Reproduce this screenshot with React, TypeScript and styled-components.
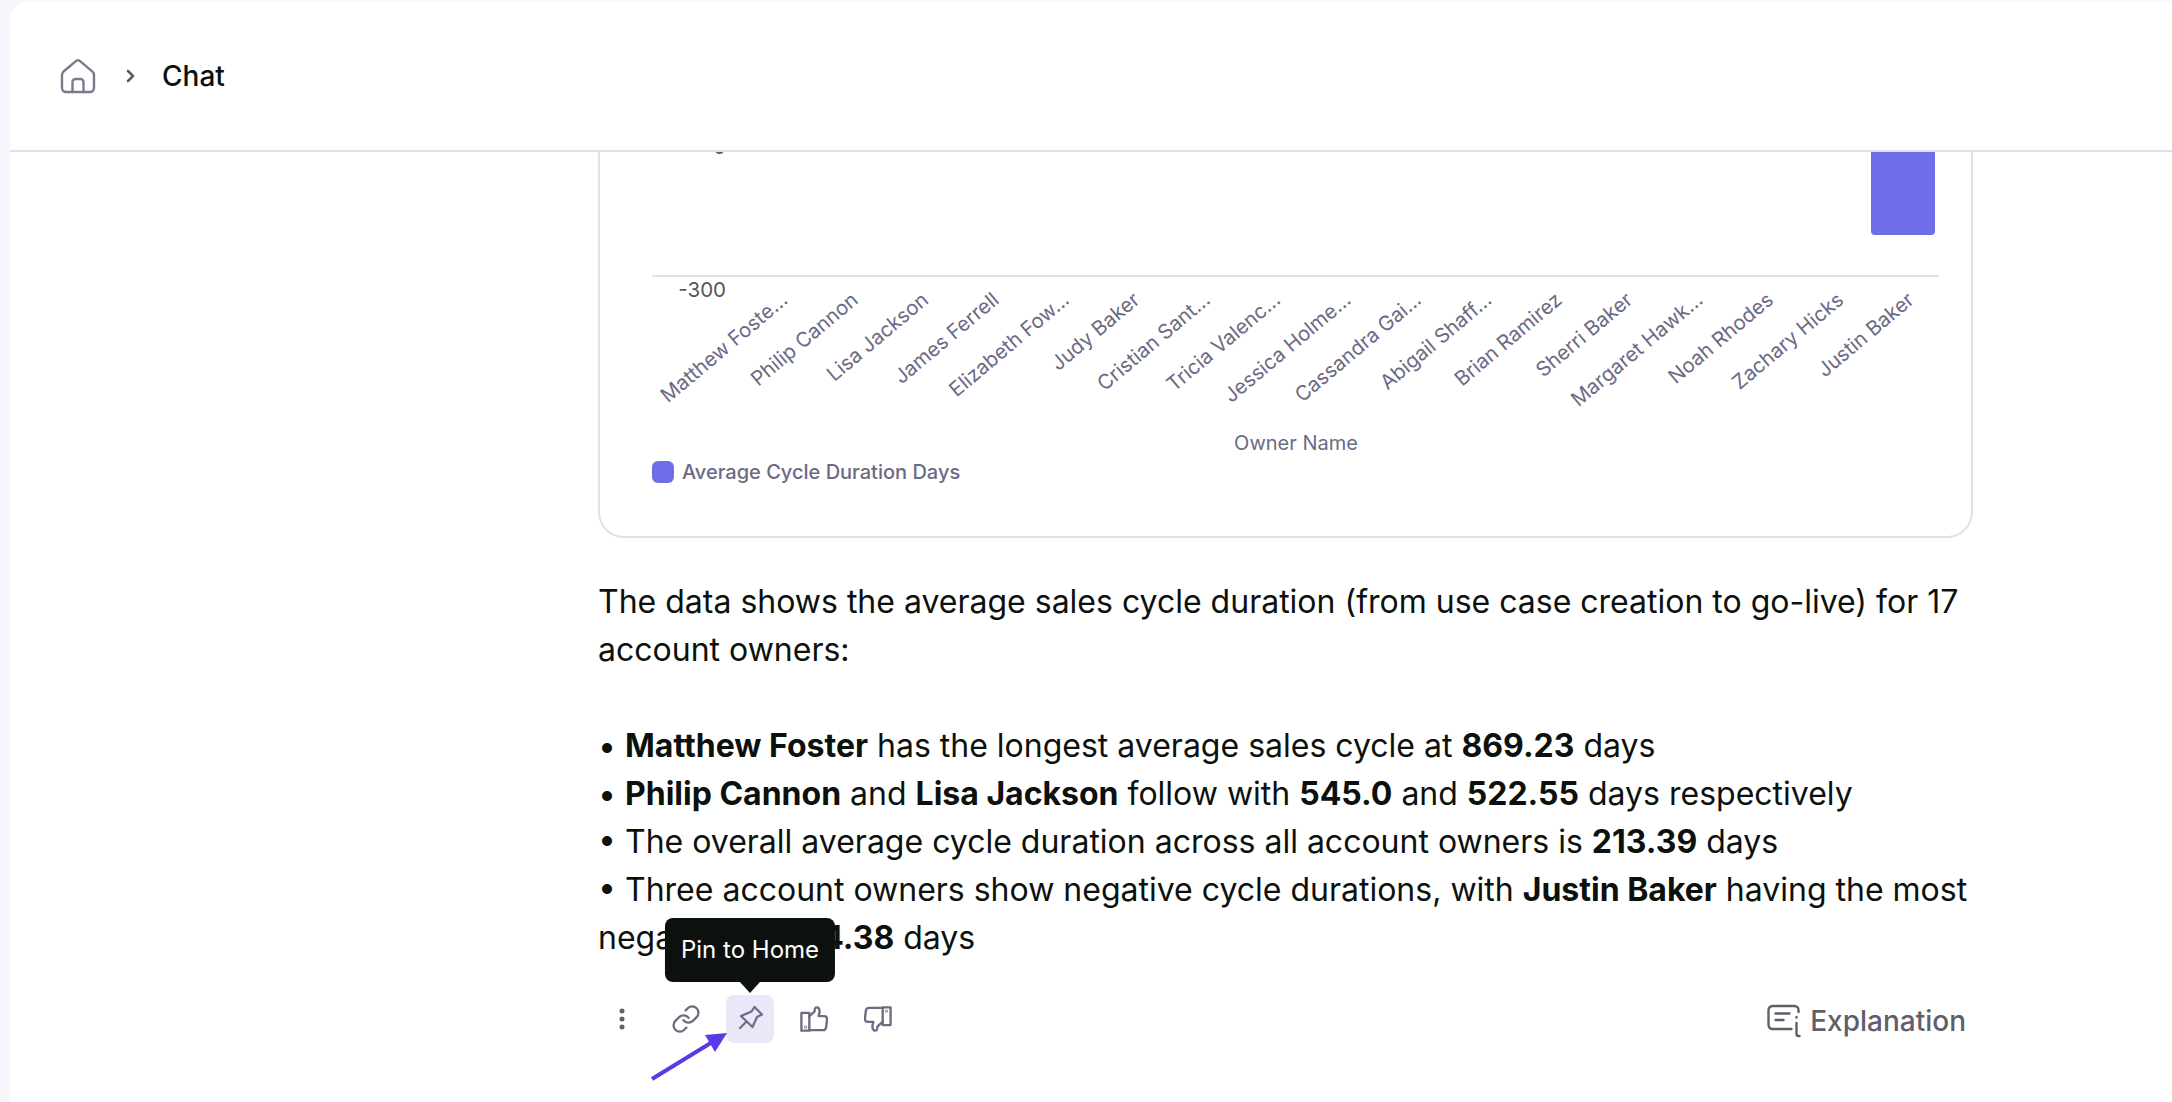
import React from "react";
import styled, { createGlobalStyle } from "styled-components";

const owners = [
  "Matthew Foste...",
  "Philip Cannon",
  "Lisa Jackson",
  "James Ferrell",
  "Elizabeth Fow...",
  "Judy Baker",
  "Cristian Sant...",
  "Tricia Valenc...",
  "Jessica Holme...",
  "Cassandra Gai...",
  "Abigail Shaff...",
  "Brian Ramirez",
  "Sherri Baker",
  "Margaret Hawk...",
  "Noah Rhodes",
  "Zachary Hicks",
  "Justin Baker",
];

const GlobalStyle = createGlobalStyle`
  html, body {
    margin: 0;
    padding: 0;
    background: #f8f7fd;
    overflow: hidden;
  }
`;

const Page = styled.div`
  width: 2172px;
  height: 1102px;
  padding: 2px 0 0 10px;
  box-sizing: border-box;
  font-family: "Inter", sans-serif;
  color: #0c110d;
`;

const Panel = styled.div`
  height: 1100px;
  background: #ffffff;
  border-top-left-radius: 18px;
  display: flex;
  flex-direction: column;
  overflow: hidden;
`;

const Header = styled.header`
  flex: none;
  height: 148px;
  padding: 0 0 0 50px;
  border-bottom: 2px solid #e2e1ea;
  display: flex;
  align-items: center;
`;

const Crumb = styled.span`
  margin-left: 27px;
  font-size: 28px;
  font-weight: 500;
  line-height: 34px;
`;

const Chevron = styled.svg`
  margin-left: 29px;
`;

const Body = styled.main`
  flex: 1;
  min-height: 0;
  overflow: hidden;
  display: flex;
  flex-direction: column;
  justify-content: flex-end;
  padding: 0 0 59px 588px;
`;

const Column = styled.div`
  width: 1375px;
  flex: none;
`;

const ChartCard = styled.section`
  box-sizing: border-box;
  border: 2px solid #e2e1ea;
  border-radius: 0 0 26px 26px;
  padding: 0 32px 53px 52px;
`;

const ChartSvg = styled.svg`
  display: block;
`;

const AxisText = styled.text`
  font-family: "Inter", sans-serif;
  font-size: 20.5px;
  fill: #55555a;
`;

const OwnerText = styled.text`
  font-family: "Inter", sans-serif;
  font-size: 20.3px;
  fill: #6b6a85;
`;

const AxisTitle = styled.text`
  font-family: "Inter", sans-serif;
  font-size: 20px;
  fill: #6b6a85;
`;

const Legend = styled.div`
  margin-top: 5px;
  display: flex;
  align-items: center;
  gap: 8px;
  font-size: 20px;
  font-weight: 500;
  line-height: 22px;
  color: #6b6a85;
`;

const Swatch = styled.span`
  width: 22px;
  height: 22px;
  border-radius: 6px;
  background: #6e6ee8;
`;

const Answer = styled.div`
  margin-top: 40px;
  font-size: 32px;
  line-height: 48px;
`;

const Para = styled.p`
  margin: 0 0 48px;
`;

const Bullet = styled.div``;

const Toolbar = styled.div`
  margin-top: 33px;
  height: 48px;
  display: flex;
  align-items: center;
  justify-content: space-between;
`;

const IconRow = styled.div`
  display: flex;
  align-items: center;
  margin-left: -8px;
`;

const IconButton = styled.button<{ $active?: boolean }>`
  position: relative;
  width: 48px;
  height: 48px;
  margin: 0 8px;
  padding: 0;
  border: 0;
  border-radius: 8px;
  background: ${(p) => (p.$active ? "#e9e8f8" : "transparent")};
  color: #6c6b80;
  display: flex;
  align-items: center;
  justify-content: center;
`;

const Tooltip = styled.div`
  position: absolute;
  left: 50%;
  bottom: 61px;
  transform: translateX(-50%);
  padding: 0 16px;
  height: 64px;
  border-radius: 8px;
  background: #0c110d;
  color: #ffffff;
  font-family: "Inter", sans-serif;
  font-size: 24px;
  line-height: 64px;
  white-space: nowrap;

  &::after {
    content: "";
    position: absolute;
    left: 50%;
    bottom: -11px;
    margin-left: -10px;
    border-left: 10px solid transparent;
    border-right: 10px solid transparent;
    border-top: 11px solid #0c110d;
  }
`;

const Annotation = styled.svg`
  position: absolute;
  left: -82px;
  top: 30px;
  overflow: visible;
`;

const ExplainButton = styled.button`
  display: flex;
  align-items: center;
  gap: 7px;
  margin: 4px 7px 0 0;
  padding: 0;
  border: 0;
  background: transparent;
  color: #5f5f6b;
  font-family: "Inter", sans-serif;
  font-size: 28px;
  font-weight: 500;
`;

const ThumbSvg = styled.svg<{ $flip?: boolean }>`
  transform: ${(p) => (p.$flip ? "rotate(180deg)" : "none")};
`;

const stroke = {
  fill: "none",
  stroke: "currentColor",
  strokeWidth: 2,
  strokeLinecap: "round" as const,
  strokeLinejoin: "round" as const,
};

const HomeIcon = () => (
  <svg width="36" height="36" viewBox="0 0 36 36" {...stroke} strokeWidth={2.4} color="#7b7a8e">
    <path d="M2 17c0-1.500.7-2.800 1.800-3.700L15.300 3.600a4 4 0 0 1 5.400 0L32.200 13.300c1.100.9 1.800 2.200 1.800 3.700V30a4 4 0 0 1-4 4H6a4 4 0 0 1-4-4z" />
    <path d="M12.500 34V24a3 3 0 0 1 3-3h5a3 3 0 0 1 3 3v10" />
  </svg>
);

const LinkIcon = () => (
  <svg width="30" height="30" viewBox="0 0 24 24" {...stroke} strokeWidth={1.8}>
    <path d="M10 13a5 5 0 0 0 7.500.5l3-3a5 5 0 0 0-7.100-7.100l-1.700 1.700" />
    <path d="M14 11a5 5 0 0 0-7.500-.5l-3 3a5 5 0 0 0 7.100 7.100l1.700-1.700" />
  </svg>
);

const PinIcon = () => (
  <svg width="48" height="48" viewBox="0 0 48 48" {...stroke} strokeWidth={2.2}>
    <path d="M28.500 12L36 19.500 31 22 26.500 32 15 21 25.500 16.500z" />
    <path d="M20.500 26.500L14 33" />
  </svg>
);

const ThumbIcon = ({ flip }: { flip?: boolean }) => (
  <ThumbSvg $flip={flip} width="28" height="28" viewBox="0 0 30 30" {...stroke} strokeWidth={2.5}>
    <path d="M1.500 8.500H10v19H1.500z" />
    <path d="M10 12l5.500-5 .5-3c.2-1 1-1.500 2-1.500 2.500 0 3 3 3 5l-1 4.500h6c2 0 3 1 3 3l-1 9c-.5 2-1.500 3-3 3H10" />
    <circle cx="6" cy="23.500" r="0.4" />
  </ThumbSvg>
);

const ExplainIcon = () => (
  <svg width="37" height="34" viewBox="0 0 36 34" {...stroke} strokeWidth={2.4}>
    <path d="M25 25H6a4 4 0 0 1-4-4V6a4 4 0 0 1 4-4h22a4 4 0 0 1 4 4v2" />
    <path d="M9 9.500h14M9 16h8" />
    <path d="M30 19v11a2 2 0 0 0 2 2h1" />
    <path d="M30 13v.5" />
  </svg>
);

export default function App() {
  return (
    <Page>
      <GlobalStyle />
      <Panel>
        <Header>
          <HomeIcon />
          <Chevron width="10" height="14" viewBox="0 0 10 14" fill="none" stroke="#5f5f6b" strokeWidth="2.600" strokeLinecap="round" strokeLinejoin="round">
            <path d="M3 2l5 5-5 5" />
          </Chevron>
          <Crumb>Chat</Crumb>
        </Header>
        <Body>
          <Column>
            <ChartCard>
              <ChartSvg width="1287" height="356" viewBox="0 0 1287 356">
                <AxisText x="74" y="53.500" textAnchor="end">0</AxisText>
                <AxisText x="74" y="197" textAnchor="end">-300</AxisText>
                <line x1="0" y1="176" x2="1287" y2="176" stroke="#e2e1ea" strokeWidth="2" />
                <path d="M1219 0h64v131a4 4 0 0 1-4 4h-56a4 4 0 0 1-4-4z" fill="#6e6ee8" />
                {owners.map((name, i) => {
                  const x = 137 + i * 70.4;
                  const y = 202;
                  return (
                    <OwnerText key={name} x={x} y={y} textAnchor="end" transform={`rotate(-40 ${x} ${y})`}>
                      {name}
                    </OwnerText>
                  );
                })}
                <AxisTitle x="644" y="350" textAnchor="middle">Owner Name</AxisTitle>
              </ChartSvg>
              <Legend>
                <Swatch />
                Average Cycle Duration Days
              </Legend>
            </ChartCard>
            <Answer>
              <Para>The data shows the average sales cycle duration (from use case creation to go-live) for 17 account owners:</Para>
              <Bullet>• <strong>Matthew Foster</strong> has the longest average sales cycle at <strong>869.23</strong> days</Bullet>
              <Bullet>• <strong>Philip Cannon</strong> and <strong>Lisa Jackson</strong> follow with <strong>545.0</strong> and <strong>522.55</strong> days respectively</Bullet>
              <Bullet>• The overall average cycle duration across all account owners is <strong>213.39</strong> days</Bullet>
              <Bullet>• Three account owners show negative cycle durations, with <strong>Justin Baker</strong> having the most negative at <strong>-124.38</strong> days</Bullet>
            </Answer>
            <Toolbar>
              <IconRow>
                <IconButton aria-label="More">
                  <svg width="6" height="24" viewBox="0 0 6 24" fill="#5f5f6b">
                    <circle cx="3" cy="4" r="2.500" />
                    <circle cx="3" cy="12" r="2.500" />
                    <circle cx="3" cy="20" r="2.500" />
                  </svg>
                </IconButton>
                <IconButton aria-label="Copy link">
                  <LinkIcon />
                </IconButton>
                <IconButton $active aria-label="Pin to Home">
                  <Tooltip>Pin to Home</Tooltip>
                  <PinIcon />
                  <Annotation width="84" height="56" viewBox="0 0 84 56">
                    <path d="M8 54L70 16" stroke="#5b38e8" strokeWidth="4" fill="none" />
                    <path d="M83 8L61 10l10 17z" fill="#5b38e8" />
                  </Annotation>
                </IconButton>
                <IconButton aria-label="Good answer">
                  <ThumbIcon />
                </IconButton>
                <IconButton aria-label="Bad answer">
                  <ThumbIcon flip />
                </IconButton>
              </IconRow>
              <ExplainButton>
                <ExplainIcon />
                Explanation
              </ExplainButton>
            </Toolbar>
          </Column>
        </Body>
      </Panel>
    </Page>
  );
}
